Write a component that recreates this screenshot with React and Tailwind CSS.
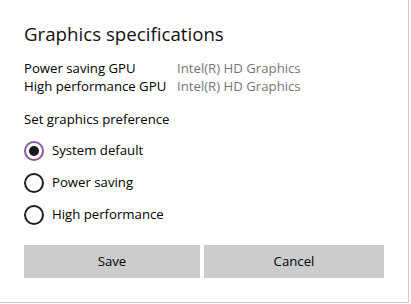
const OPTIONS = ["System default", "Power saving", "High performance"];

function Radio({ checked }) {
  return (
    <span
      className={`flex h-[20px] w-[20px] shrink-0 items-center justify-center rounded-full border-2 ${
        checked ? "border-[#8a5a9c]" : "border-[#1f1f1f]"
      }`}
    >
      {checked && <span className="h-[10px] w-[10px] rounded-full bg-[#1a1a1a]" />}
    </span>
  );
}

export default function App() {
  const selected = 0;

  return (
    <div
      className="h-[303px] w-[409px] border-r border-b border-[#cccccc] bg-white text-[13.2px] text-black"
      style={{ fontFamily: '"Open Sans", "Noto Sans", sans-serif' }}
    >
      <div className="px-[24px] pt-[20px]">
        <h1 className="text-[18.7px] leading-[28px] text-[#111]">Graphics specifications</h1>

        <div className="mt-[11px] grid grid-cols-[153px_1fr] leading-[18px]">
          <span>Power saving GPU</span>
          <span className="text-[#767676]">Intel(R) HD Graphics</span>
          <span>High performance GPU</span>
          <span className="text-[#767676]">Intel(R) HD Graphics</span>
        </div>

        <div className="mt-[15px] leading-[18px]">Set graphics preference</div>

        <div className="mt-[13px] flex flex-col gap-[12px]">
          {OPTIONS.map((label, i) => (
            <label key={label} className="flex h-[20px] items-center gap-[8px]">
              <Radio checked={i === selected} />
              <span>{label}</span>
            </label>
          ))}
        </div>

        <div className="mt-[20px] flex gap-[4px]">
          <button type="button" className="h-[33px] w-[176px] bg-[#cccccc]">
            Save
          </button>
          <button type="button" className="h-[33px] w-[180px] bg-[#cccccc]">
            Cancel
          </button>
        </div>
      </div>
    </div>
  );
}
